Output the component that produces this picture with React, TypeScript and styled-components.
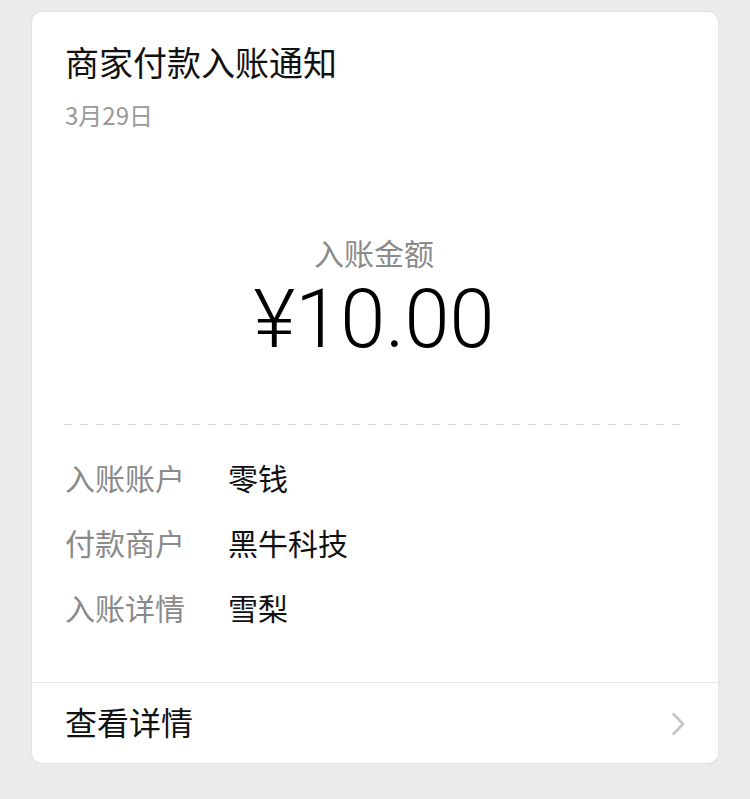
import React from "react";
import styled, { createGlobalStyle } from "styled-components";

const GlobalStyle = createGlobalStyle`
  html, body {
    margin: 0;
    padding: 0;
    background: #ebebeb;
  }

  body {
    font-family: "Noto Sans CJK SC", "Noto Sans", sans-serif;
    color: #111;
  }
`;

const COLORS = {
  text: "#111111",
  secondary: "#8a8a8a",
  muted: "#999999",
  dash: "#d9d9d9",
  divider: "#e3e3e3",
  chevron: "#c4c4c4",
};

/* Card */
const Page = styled.div`
  width: 750px;
  min-height: 799px;
  padding: 12px 32px 0;
  box-sizing: border-box;
`;

const Card = styled.div`
  background: #ffffff;
  border-radius: 10px;
  box-shadow: 0 0 0 1px #e2e2e2;
  overflow: hidden;
`;

const Body = styled.div`
  padding: 28px 38px 55px 33px;
`;

/* Header */
const Title = styled.div`
  font-size: 34px;
  line-height: 44px;
  color: ${COLORS.text};
`;

const DateText = styled.div`
  margin-top: 15px;
  font-size: 24px;
  line-height: 32px;
  color: ${COLORS.muted};
`;

/* Amount */
const AmountBlock = styled.div`
  margin-top: 101px;
  display: flex;
  flex-direction: column;
  align-items: center;
  padding-left: 3px;
`;

const AmountLabel = styled.div`
  font-size: 30px;
  line-height: 40px;
  color: ${COLORS.secondary};
`;

const AmountValue = styled.div`
  margin-top: 3px;
  font-family: "Roboto", "Liberation Sans", sans-serif;
  font-weight: 300;
  font-size: 81px;
  line-height: 90px;
  color: #000;
`;

const DashedLine = styled.div`
  margin: 59px 0 0 -1px;
  height: 1px;
  background: repeating-linear-gradient(
    to right,
    ${COLORS.dash} 0 8px,
    transparent 8px 16px
  );
`;

/* Details */
const DetailList = styled.div`
  margin-top: 32px;
  display: flex;
  flex-direction: column;
  gap: 25px;
`;

const DetailRow = styled.div`
  display: grid;
  grid-template-columns: 163px 1fr;
  font-size: 30px;
  line-height: 40px;
`;

const DetailLabel = styled.span`
  color: ${COLORS.secondary};
`;

const DetailValue = styled.span`
  color: ${COLORS.text};
`;

/* Footer */
const Footer = styled.div`
  height: 80px;
  border-top: 1px solid ${COLORS.divider};
  display: flex;
  align-items: center;
  justify-content: space-between;
  padding: 0 32px 0 33px;
`;

const FooterText = styled.span`
  font-size: 32px;
  line-height: 40px;
  margin-bottom: 4px;
  color: ${COLORS.text};
`;

const Chevron = () => (
  <svg width="16" height="26" viewBox="0 0 16 26" style={{ marginTop: 2 }}>
    <path
      d="M3.5 3 L13 13 L3.5 23"
      fill="none"
      stroke={COLORS.chevron}
      strokeWidth="2.6"
      strokeLinecap="round"
      strokeLinejoin="round"
    />
  </svg>
);

const details = [
  { label: "入账账户", value: "零钱" },
  { label: "付款商户", value: "黑牛科技" },
  { label: "入账详情", value: "雪梨" },
];

export default function App() {
  return (
    <>
      <GlobalStyle />
      <Page>
        <Card>
          <Body>
            <Title>商家付款入账通知</Title>
            <DateText>3月29日</DateText>
            <AmountBlock>
              <AmountLabel>入账金额</AmountLabel>
              <AmountValue>¥10.00</AmountValue>
            </AmountBlock>
            <DashedLine />
            <DetailList>
              {details.map((d) => (
                <DetailRow key={d.label}>
                  <DetailLabel>{d.label}</DetailLabel>
                  <DetailValue>{d.value}</DetailValue>
                </DetailRow>
              ))}
            </DetailList>
          </Body>
          <Footer>
            <FooterText>查看详情</FooterText>
            <Chevron />
          </Footer>
        </Card>
      </Page>
    </>
  );
}
